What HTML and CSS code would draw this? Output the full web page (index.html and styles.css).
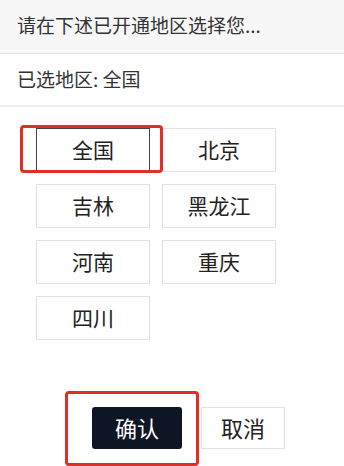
FILE: index.html
```html
<!DOCTYPE html>
<html>
    <head>
        <title>选择地区</title>
        <link rel="stylesheet" href="styles.css">
    </head>
    <body>
        <div class="header">请在下述已开通地区选择您...</div>
        <div class="current">已选地区: 全国</div>

        <div class="regions">
            <button class="region-button selected">全国</button>
            <button class="region-button">北京</button>
            <button class="region-button">吉林</button>
            <button class="region-button">黑龙江</button>
            <button class="region-button">河南</button>
            <button class="region-button">重庆</button>
            <button class="region-button">四川</button>
        </div>

        <div class="actions">
            <button class="confirm-button">确认</button>
            <button class="cancel-button">取消</button>
        </div>

        <!-- red marks drawn over the page -->
        <div class="mark mark-region"></div>
        <div class="mark mark-confirm"></div>
    </body>
</html>
```

FILE: styles.css
```css
body{
    margin:0;
    background-color:white;
    color:#222;
    font-family:"Noto Sans CJK SC", "Noto Sans", sans-serif;
}

.header{
    height:53px;
    line-height:49px;
    padding-left:17px;
    font-size:19px;
    color:#333;
    background-color:#f7f7f7;
    border-bottom:1px solid #e4e4e4;
}

.current{
    height:51px;
    line-height:49px;
    padding-left:17px;
    font-size:19px;
    color:#333;
    border-bottom:2px solid #ececec;
}

.regions{
    display:grid;
    grid-template-columns:114px 114px;
    grid-auto-rows:44px;
    gap:12px;
    padding:21px 0 0 36px;
}

.region-button{
    background-color:white;
    border:1px solid #e2e2e2;
    font-family:inherit;
    font-size:21px;
    color:#222;
    padding:0 0 2px 0;
}

.region-button.selected{
    border-color:#444;
}

.actions{
    display:flex;
    gap:19px;
    padding:67px 0 0 92px;
}

.confirm-button{
    width:90px;
    height:42px;
    background-color:#0e1525;
    color:white;
    border:none;
    border-radius:3px;
    font-family:inherit;
    font-size:22px;
    padding:0 0 2px 0;
}

.cancel-button{
    width:84px;
    height:42px;
    background-color:white;
    color:#222;
    border:1px solid #e2e2e2;
    font-family:inherit;
    font-size:22px;
    padding:0 0 2px 0;
}

.mark{
    position:absolute;
    border:3px solid #df2f28;
    border-radius:4px;
    box-sizing:border-box;
}

.mark-region{
    left:20px;
    top:125px;
    width:143px;
    height:48px;
}

.mark-confirm{
    left:65px;
    top:391px;
    width:134px;
    height:75px;
}
```
